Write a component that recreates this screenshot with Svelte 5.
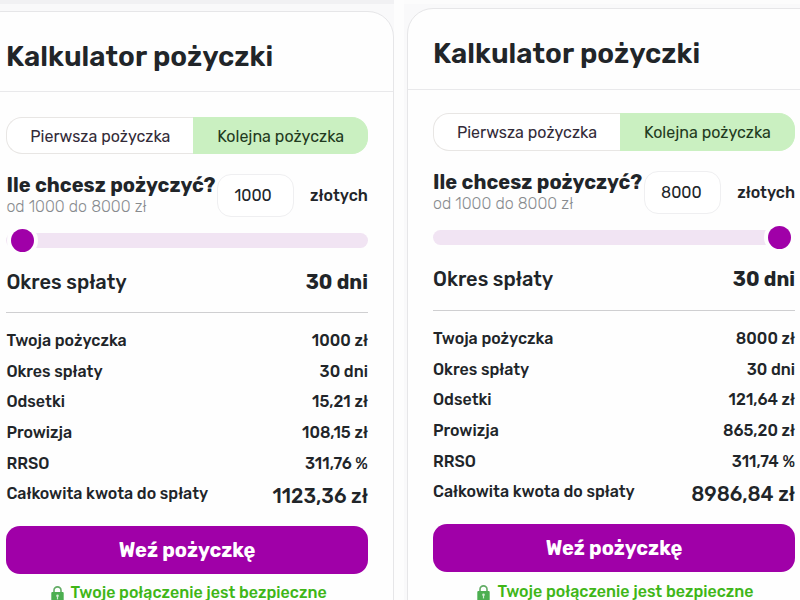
<script lang="ts">
  type Offer = {
    side: 'left' | 'right';
    amount: number;
    progress: number;
    rows: [string, string][];
    total: string;
  };

  const offers: Offer[] = [
    {
      side: 'left',
      amount: 1000,
      progress: 0,
      rows: [
        ['Twoja pożyczka', '1000 zł'],
        ['Okres spłaty', '30 dni'],
        ['Odsetki', '15,21 zł'],
        ['Prowizja', '108,15 zł'],
        ['RRSO', '311,76 %'],
      ],
      total: '1123,36 zł',
    },
    {
      side: 'right',
      amount: 8000,
      progress: 1,
      rows: [
        ['Twoja pożyczka', '8000 zł'],
        ['Okres spłaty', '30 dni'],
        ['Odsetki', '121,64 zł'],
        ['Prowizja', '865,20 zł'],
        ['RRSO', '311,74 %'],
      ],
      total: '8986,84 zł',
    },
  ];
</script>

<div class="compare">
  {#each offers as offer}
    <div class="pane {offer.side}">
      <section class="card">
        <header>
          <h1>Kalkulator pożyczki</h1>
        </header>

        <div class="body">
          <div class="tabs">
            <button class="tab first">Pierwsza pożyczka</button>
            <button class="tab active">Kolejna pożyczka</button>
          </div>

          <div class="amount">
            <div class="question">
              <h2>Ile chcesz pożyczyć?</h2>
              <p>od 1000 do 8000 zł</p>
            </div>
            <div class="field">{offer.amount}</div>
            <span class="unit">złotych</span>
          </div>

          <div class="slider">
            <span class="thumb" style="left: {offer.progress * 100}%; --p: {offer.progress}"></span>
          </div>

          <div class="period">
            <span>Okres spłaty</span>
            <strong>30 dni</strong>
          </div>

          <dl>
            {#each offer.rows as [label, value]}
              <div class="row">
                <dt>{label}</dt>
                <dd>{value}</dd>
              </div>
            {/each}
            <div class="row total">
              <dt>Całkowita kwota do spłaty</dt>
              <dd>{offer.total}</dd>
            </div>
          </dl>

          <button class="cta">Weź pożyczkę</button>

          <div class="secure">
            <svg width="13" height="16" viewBox="0 0 13 16" aria-hidden="true">
              <path d="M3 7V4.2a3.5 3.3 0 0 1 7 0V7" fill="none" stroke="#62ac65" stroke-width="1.6" />
              <rect x="0.3" y="6" width="12.4" height="10" rx="1" fill="#4caf50" />
              <circle cx="6.5" cy="9.8" r="1.3" fill="#d4ecd5" />
              <path d="M6.5 10v3.4" stroke="#d4ecd5" stroke-width="1.2" />
            </svg>
            <span>Twoje połączenie jest bezpieczne</span>
          </div>
        </div>
      </section>
    </div>
  {/each}
</div>

<style>
  :global(body) {
    overflow: hidden;
  }

  .compare {
    display: flex;
    width: 800px;
    height: 600px;
    overflow: hidden;
    background: #fdfdfd;
    font-family: Rubik, Roboto, sans-serif;
    color: #212529;
  }

  .pane {
    box-sizing: border-box;
    height: 600px;
    overflow: hidden;
    background: #f9f9fa;
  }
  .pane.left {
    width: 394px;
    padding-top: 7px;
    border-top: 4px solid #f1f1f3;
  }
  .pane.right {
    width: 396px;
    margin-left: 10px;
    padding: 4px 0 0 3px;
    border-top: 4px solid #fcfcfc;
  }

  .card {
    box-sizing: border-box;
    width: 419px;
    height: 640px;
    background: #fefefe;
    border: 1px solid #e6e6e8;
    border-radius: 26px;
  }
  .left .card {
    margin-left: -25px;
  }

  header {
    display: flex;
    align-items: center;
    height: 69px;
    padding: 10px 25px 0;
    border-bottom: 1px solid #e9e9eb;
  }
  .right header {
    height: 70px;
  }
  .left header {
    padding-left: 30px;
  }

  h1,
  h2,
  p,
  dl,
  dd {
    margin: 0;
  }
  h1 {
    font-size: 28px;
    line-height: 34px;
    font-weight: 600;
    letter-spacing: 0.05px;
  }

  .body {
    width: 362px;
    margin-left: 25px;
    padding-top: 23px;
  }
  .left .body {
    width: 361.5px;
    margin-left: 30.4px;
    padding-top: 25px;
  }

  .tabs {
    display: flex;
    height: 37px;
  }
  .right .tabs {
    height: 38px;
  }
  .tab {
    box-sizing: border-box;
    flex: 1;
    padding: 1px 0 0;
    background: #fff;
    border: 1px solid #dfeadc;
    border-left: 0;
    border-radius: 0 16px 16px 0;
    font: 400 16px Rubik, Roboto, sans-serif;
    color: #332b38;
  }
  .tab.first {
    flex: 0 0 187px;
    border: 1px solid #e8e6e4;
    border-right: 0;
    border-radius: 16px 0 0 16px;
  }
  .tab.active {
    padding-left: 1px;
    background: #caf0c1;
    border-color: #caf0c1;
    color: #1f3a20;
  }

  .amount {
    display: flex;
    align-items: center;
    height: 43px;
    margin-top: 20px;
  }
  .question {
    width: 211px;
    white-space: nowrap;
  }
  h2 {
    font-size: 20px;
    line-height: 20px;
    font-weight: 700;
    letter-spacing: 0.05px;
  }
  p {
    padding-top: 2px;
    font-size: 16px;
    line-height: 20px;
    font-weight: 300;
    color: #888b8e;
  }
  .field {
    box-sizing: border-box;
    width: 77px;
    height: 43px;
    padding-left: 16px;
    background: #fff;
    border: 1px solid #efeff1;
    border-radius: 14px;
    font-size: 16px;
    line-height: 41px;
  }
  .unit {
    margin-left: auto;
    font-size: 16px;
    font-weight: 500;
  }

  .slider {
    position: relative;
    height: 15px;
    margin-top: 16px;
    background: #f1e4f3;
    border-radius: 8px;
  }
  .thumb {
    position: absolute;
    top: -4px;
    width: 23px;
    height: 23px;
    margin-left: calc(4.5px + var(--p) * -32px);
    background: #a000a8;
    border-radius: 50%;
    box-shadow: 0 0 0 4px #fefefe;
  }

  .period {
    display: flex;
    align-items: center;
    justify-content: space-between;
    box-sizing: border-box;
    height: 65px;
    padding-top: 3px;
    border-bottom: 1px solid #cfcfd1;
    font-size: 20px;
    font-weight: 500;
  }
  .right .period {
    height: 66px;
  }
  .period strong {
    font-weight: 700;
  }

  dl {
    padding-top: 12.5px;
  }
  .row {
    display: flex;
    align-items: center;
    justify-content: space-between;
    height: 30.6px;
    font-size: 16px;
    font-weight: 500;
  }
  .total dd {
    padding-top: 5px;
    font-size: 20px;
  }

  .cta {
    display: block;
    width: 100%;
    height: 48px;
    margin-top: 17px;
    padding: 0;
    background: #a000a8;
    border: 0;
    border-radius: 14px;
    font: 750 20px Rubik, Roboto, sans-serif;
    line-height: 44px;
    color: #fff;
  }

  .secure {
    display: flex;
    align-items: flex-start;
    justify-content: center;
    gap: 7px;
    padding: 10px 0 0 3px;
    font-size: 16px;
    line-height: 18px;
    font-weight: 500;
    white-space: nowrap;
    color: #3fb618;
  }
  .right .secure {
    padding-top: 11px;
  }
  .secure svg {
    margin-top: 2px;
  }
</style>
